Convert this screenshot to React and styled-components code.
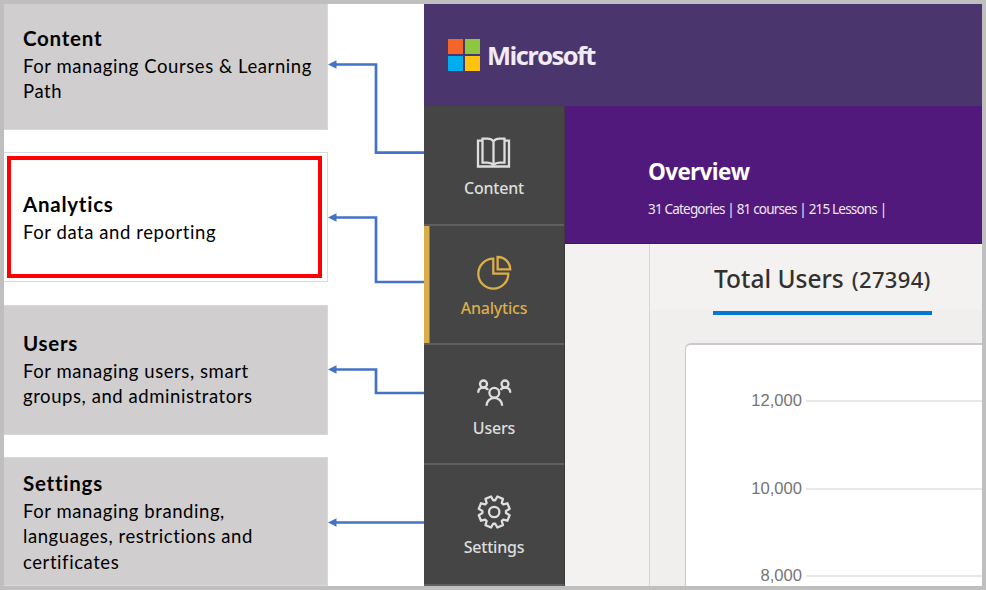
import React from 'react';
import styled, { createGlobalStyle } from 'styled-components';

const Global = createGlobalStyle`
  *, *::before, *::after { box-sizing: border-box; }
  body { margin: 0; background: #fff; }
`;

const segoe = '"Noto Sans", "Open Sans", sans-serif';
const calibri = 'Lato, sans-serif';

const Frame = styled.main`
  width: 986px;
  height: 590px;
  border: 4px solid #bfbfbf;
  display: flex;
  overflow: hidden;
  background: #fff;
`;

/* Legend */
const Legend = styled.section`
  width: 324px;
  flex: none;
  display: grid;
  grid-template-rows: 126px 131px 130px 129px;
  row-gap: 22px;
`;

const LegendCard = styled.article`
  position: relative;
  margin-bottom: ${(p) => (p.$active ? 1 : 0)}px;
  padding: ${(p) => p.$top}px 0 0 19px;
  border: solid #d9d9d9;
  border-width: ${(p) => (p.$first ? 0 : 1)}px 1px 1px 0;
  background: ${(p) => (p.$active ? '#fff' : '#d0cece')};
  color: #000;
  font-family: ${calibri};
  white-space: pre-line;
`;

const LegendTitle = styled.h2`
  margin: 0 0 2px;
  font-size: 20.5px;
  line-height: 28px;
  font-weight: 700;
  letter-spacing: 0.75px;
`;

const LegendText = styled.p`
  margin: 0;
  font-size: 18.5px;
  line-height: 25.3px;
  letter-spacing: 0.57px;
`;

const Highlight = styled.div`
  position: absolute;
  inset: 3px 5px 3px 3px;
  border: 4px solid #ff0000;
`;

const Connectors = styled.svg`
  width: 96px;
  height: 582px;
  flex: none;
  display: block;
`;

/* Application */
const AppWindow = styled.section`
  flex: 1;
  min-width: 0;
  display: flex;
  flex-direction: column;
  font-family: ${segoe};
`;

const Header = styled.header`
  height: 102px;
  flex: none;
  display: flex;
  align-items: center;
  gap: 7px;
  padding-left: 23.5px;
  background: #4a366c;
`;

const LogoGrid = styled.div`
  display: grid;
  grid-template: 15.5px 15.5px / 15.5px 15.5px;
  gap: 1.5px;
`;

const LogoTile = styled.span`
  background: ${(p) => p.$color};
`;

const Brand = styled.span`
  font: 700 25.5px/34px "Open Sans", sans-serif;
  letter-spacing: -1.55px;
  color: #f0ebf6;
`;

const Body = styled.div`
  flex: 1;
  min-height: 0;
  display: flex;
`;

const Sidebar = styled.nav`
  width: 141px;
  flex: none;
  display: grid;
  grid-template-rows: 120px 119px 120px 121px;
  border-right: 1px solid #3b3b3b;
  background: #454545;
`;

const NavItem = styled.a`
  display: flex;
  flex-direction: column;
  align-items: center;
  gap: ${(p) => p.$gap}px;
  padding-top: 27px;
  border-bottom: 2px solid #5f5f5f;
  box-shadow: ${(p) => (p.$active ? 'inset 5.5px 0 #d9ae4a' : 'none')};
  color: ${(p) => (p.$active ? '#dbae4a' : '#dedede')};
  font-size: 16px;
  font-weight: 500;
  line-height: 24px;
  letter-spacing: -0.2px;
`;

const NavIcon = styled.svg`
  width: 40px;
  height: 40px;
  flex: none;
  fill: none;
  stroke: currentColor;
  stroke-width: 2.3;
`;

const Content = styled.div`
  flex: 1;
  min-width: 0;
  display: flex;
  flex-direction: column;
`;

const Banner = styled.div`
  height: 138px;
  flex: none;
  padding: 49px 0 0 83px;
  border-bottom: 1px solid #4b0f73;
  background: #51197b;
  color: #fff;
`;

const BannerTitle = styled.h1`
  margin: 0;
  font: 700 22.5px/33px "Open Sans", sans-serif;
  letter-spacing: -0.65px;
`;

const BannerStats = styled.p`
  margin: 10px 0 0;
  font-size: 13.5px;
  line-height: 22px;
  letter-spacing: -0.81px;
  color: #efe8f5;
`;

const Columns = styled.div`
  flex: 1;
  min-height: 0;
  display: flex;
  background: #f3f2f0;
`;

const Report = styled.div`
  flex: 1;
  margin-left: 84px;
  display: flex;
  flex-direction: column;
  border-left: 1px solid #d6d6d6;
  background: linear-gradient(#f3f2f0 66px, #f0efee 66px);
`;

const Tab = styled.div`
  align-self: flex-start;
  flex: none;
  height: 71px;
  width: 219px;
  margin-left: 63px;
  padding: 17px 0 0 1px;
  border-bottom: 4px solid #0078d4;
  display: flex;
  align-items: baseline;
  gap: 8px;
  color: #323130;
  white-space: nowrap;
`;

const TabLabel = styled.span`
  font-size: 24.5px;
  font-weight: 500;
  line-height: 36px;
`;

const TabCount = styled.span`
  font-size: 22px;
  font-weight: 500;
  letter-spacing: 0.35px;
`;

const ChartCard = styled.div`
  flex: 1;
  min-height: 0;
  margin: 28px 0 0 35px;
  padding-top: 44px;
  overflow: hidden;
  border: solid #c9c8ca;
  border-width: 2px 0 0 1px;
  border-top-left-radius: 6px;
  background: #fff;
`;

const TickRow = styled.div`
  display: flex;
  align-items: center;
  gap: 4px;
  height: 24px;
  margin-bottom: 63.5px;
`;

const TickLabel = styled.span`
  width: 116px;
  text-align: right;
  font: 16.6px/24px "Liberation Sans", Arial, sans-serif;
  color: #757575;
`;

const GridLine = styled.span`
  flex: 1;
  height: 2px;
  background: #e8e8e8;
`;

const toothPath = (() => {
  const cx = 494.2;
  const cy = 512;
  const pt = (r, deg) => {
    const a = (deg * Math.PI) / 180;
    return `${(cx + r * Math.cos(a)).toFixed(2)} ${(cy + r * Math.sin(a)).toFixed(2)}`;
  };
  const points = [];
  for (let i = 0; i < 8; i += 1) {
    const c = 22.5 + i * 45;
    points.push(pt(11.8, c - 17.5), pt(15.8, c - 11), pt(15.8, c + 11), pt(11.8, c + 17.5));
  }
  return `M${points.join('L')}Z`;
})();

const navItems = [
  {
    label: 'Content',
    gap: 2.5,
    viewBox: '474 133 40 40',
    icon: (
      <>
        <path d="M482 140.700h-4v25.800h31v-25.800h-4" />
        <path d="M493.500 141.200c-1.500-1.800-4-2.500-6-2.500h-5v24h5c2.500 0 4.500.8 6 2.300 1.500-1.500 3.500-2.300 6-2.300h5v-24h-5c-2 0-4.500.7-6 2.500zv23.500" />
      </>
    ),
  },
  {
    label: 'Analytics',
    gap: 2.5,
    viewBox: '474 253 40 40',
    icon: (
      <>
        <path d="M493.300 258.700a15 15 0 1 0 15 15h-15z" />
        <path d="M497.600 257v12.400h12.600c0-7-5.600-12.400-12.600-12.400z" />
      </>
    ),
  },
  {
    label: 'Users',
    gap: 4,
    viewBox: '474 372 40 40',
    icon: (
      <>
        <circle cx="494.300" cy="392.700" r="4.900" />
        <circle cx="483.500" cy="384" r="3.500" />
        <circle cx="505" cy="384" r="3.500" />
        <path d="M486.500 405.700a7.850 7.850 0 0 1 15.700 0" />
        <path d="M478.200 392.800c0-3.200 2.200-5.100 5.300-5.100 2 0 3.600.8 4.500 2.300M510.300 392.800c0-3.200-2.200-5.100-5.300-5.100-2 0-3.600.8-4.500 2.300" />
      </>
    ),
  },
  {
    label: 'Settings',
    gap: 2.5,
    viewBox: '474 492 40 40',
    icon: (
      <>
        <path d={toothPath} strokeLinejoin="round" />
        <circle cx="494.200" cy="512" r="5.200" />
      </>
    ),
  },
];

const legend = [
  { title: 'Content', text: 'For managing Courses & Learning\nPath', top: 20, first: true },
  { title: 'Analytics', text: 'For data and reporting', top: 37 },
  { title: 'Users', text: 'For managing users, smart\ngroups, and administrators', top: 23 },
  { title: 'Settings', text: 'For managing branding,\nlanguages, restrictions and\ncertificates', top: 11 },
];

const links = [
  { y: 60.5, path: 'M6 60.500H48V148.700H96' },
  { y: 213.5, path: 'M6 213.500H48V278H96' },
  { y: 365.5, path: 'M6 365.500H48V389H96' },
  { y: 518.5, path: 'M6 518.500H96' },
];

const selected = 'Analytics';

export default function App() {
  return (
    <Frame>
      <Global />
      <Legend>
        {legend.map((item) => (
          <LegendCard
            key={item.title}
            $top={item.top}
            $first={item.first}
            $active={item.title === selected}
          >
            <LegendTitle>{item.title}</LegendTitle>
            <LegendText>{item.text}</LegendText>
            {item.title === selected && <Highlight />}
          </LegendCard>
        ))}
      </Legend>
      <Connectors viewBox="0 0 96 582">
        {links.map((link) => (
          <g key={link.y}>
            <path d={link.path} fill="none" stroke="#4472c4" strokeWidth="2.700" />
            <path d={`M0 ${link.y}l8.500-4.300v8.600z`} fill="#4472c4" />
          </g>
        ))}
      </Connectors>
      <AppWindow>
        <Header>
          <LogoGrid>
            <LogoTile $color="#f3652b" />
            <LogoTile $color="#8dc63f" />
            <LogoTile $color="#00aeef" />
            <LogoTile $color="#ffc20e" />
          </LogoGrid>
          <Brand>Microsoft</Brand>
        </Header>
        <Body>
          <Sidebar>
            {navItems.map((item) => (
              <NavItem key={item.label} $active={item.label === selected} $gap={item.gap}>
                <NavIcon viewBox={item.viewBox}>{item.icon}</NavIcon>
                {item.label}
              </NavItem>
            ))}
          </Sidebar>
          <Content>
            <Banner>
              <BannerTitle>Overview</BannerTitle>
              <BannerStats>31 Categories | 81 courses | 215 Lessons |</BannerStats>
            </Banner>
            <Columns>
              <Report>
                <Tab>
                  <TabLabel>Total Users</TabLabel>
                  <TabCount>(27394)</TabCount>
                </Tab>
                <ChartCard>
                  {['12,000', '10,000', '8,000'].map((tick) => (
                    <TickRow key={tick}>
                      <TickLabel>{tick}</TickLabel>
                      <GridLine />
                    </TickRow>
                  ))}
                </ChartCard>
              </Report>
            </Columns>
          </Content>
        </Body>
      </AppWindow>
    </Frame>
  );
}
